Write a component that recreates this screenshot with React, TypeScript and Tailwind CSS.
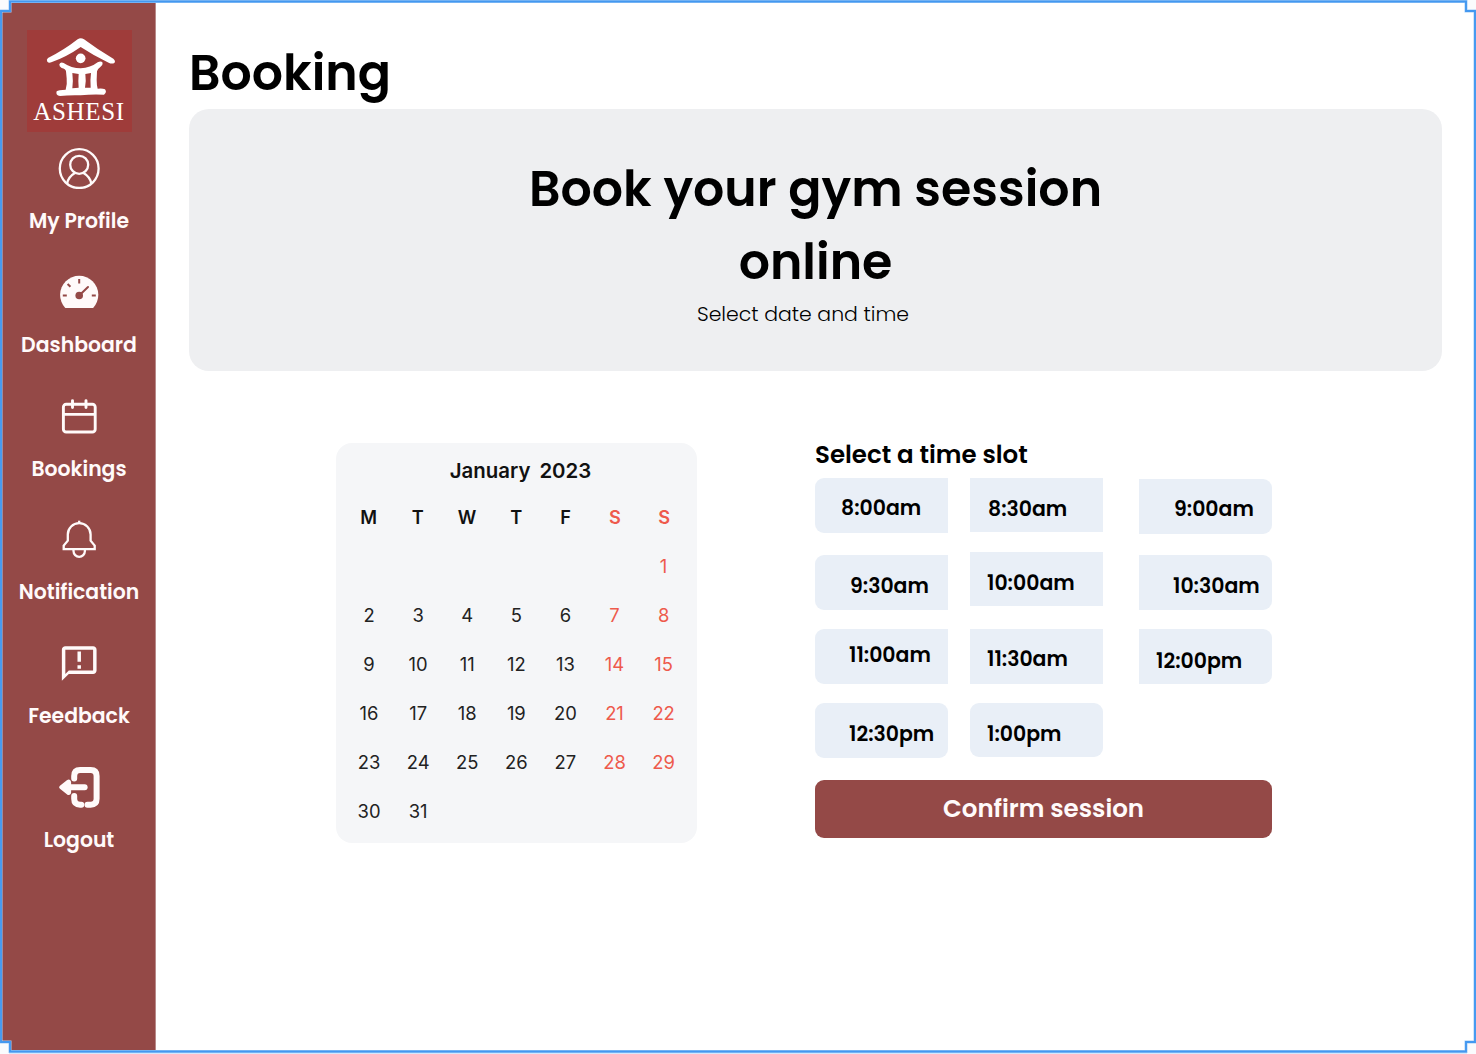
import type { ReactNode } from "react";

function Logo() {
  return (
    <div className="flex h-[102px] w-[105px] flex-col items-center bg-[#9f3c3a]">
      <svg width="105" height="66" viewBox="80 90 315 198" fill="#fff" className="shrink-0">
        <path d="M143 174 Q190 151 232 118 Q241 111 251 118 Q292 149 339 176 Q347 183 342 189 Q334 193 325 188 Q280 167 241 141 Q200 170 153 187 Q145 190 141 185 Q137 179 143 174Z" />
        <circle cx="241" cy="175" r="14.5" />
        <path d="M177 193 Q180 185 190 189 Q213 205 241 205 Q270 204 292 187 Q302 181 307 188 Q308 195 300 201 Q292 206 290 214 L289 240 Q289 256 292 266 Q306 264 314 268 Q321 277 311 284 Q275 282 241 286 Q205 285 179 288 Q165 286 169 274 Q174 269 196 269 Q201 252 199 235 L197 214 Q196 207 184 204 Q176 199 177 193Z" />
        <path d="M216 219 L235 222 Q233 245 235 263 L216 265 Q219 242 216 219Z M255 222 L272 219 Q269 242 271 263 L254 263 Q258 243 255 222Z" fill="#9f3c3a" />
      </svg>
      <span className="mt-[2px] font-['Liberation_Serif',serif] text-[25px] leading-7 tracking-[0.7px] text-white">ASHESI</span>
    </div>
  );
}

function Icon({ y, children }: { y: number; children: ReactNode }) {
  return (
    <svg width="48" height="42" viewBox={`55 ${y} 48 42`} fill="none" stroke="#fffafa" className="block shrink-0">
      {children}
    </svg>
  );
}

const nav = [
  {
    label: "My Profile",
    icon: (
      <Icon y={147}>
        <g strokeWidth="2.3">
          <circle cx="79.2" cy="168.6" r="19.4" />
          <circle cx="79.2" cy="164.8" r="9" />
          <path d="M67 184 C67.6 179 71 175.3 75.2 172.8 M91.4 184 C90.8 179 87.4 175.3 83.2 172.8" />
        </g>
      </Icon>
    ),
  },
  {
    label: "Dashboard",
    icon: (
      <Icon y={271}>
        <path d="M65.3 308 A19.1 19.1 0 1 1 93.1 308 Z" fill="#fffafa" stroke="none" />
        <g stroke="#944947" strokeWidth="2">
          <path d="M79.2 279v4.5 M62.8 295.5h4 M91.8 295.5h4 M67.6 284l2.8 2.8" />
          <path d="M79.2 295.5L88 287" strokeLinecap="round" />
        </g>
        <circle cx="79.2" cy="295.5" r="3.8" fill="#944947" stroke="none" />
      </Icon>
    ),
  },
  {
    label: "Bookings",
    icon: (
      <Icon y={395}>
        <g strokeWidth="2.9">
          <rect x="63.4" y="404.2" width="31.8" height="27.8" rx="2.8" />
          <path d="M63.5 414.4h31.6" />
          <path d="M72.5 400.6v7 M86 400.6v7" strokeLinecap="round" />
        </g>
      </Icon>
    ),
  },
  {
    label: "Notification",
    icon: (
      <Icon y={518}>
        <g strokeWidth="2.3">
          <path d="M79.2 520.7v3" />
          <path d="M63.7 549.2v-3.6l4.1-4.9v-6.3a11.4 11.2 0 0 1 22.8 0v6.3l4.1 4.9v3.6z" />
          <path d="M73.5 549.5v1.6a5.7 5.7 0 0 0 11.4 0v-1.6" />
        </g>
      </Icon>
    ),
  },
  {
    label: "Feedback",
    icon: (
      <Icon y={642}>
        <path
          transform="translate(58.4 642.7) scale(1.735)"
          fill="#fffafa"
          stroke="none"
          d="M20 2H4c-1.1 0-2 .9-2 2v18l4-4h14c1.1 0 2-.9 2-2V4c0-1.1-.9-2-2-2m0 14H6l-2 2V4h16zM11 5h2v6h-2zm0 8h2v2h-2z"
        />
      </Icon>
    ),
  },
  {
    label: "Logout",
    icon: (
      <Icon y={766}>
        <g strokeWidth="6" strokeLinecap="round">
          <path d="M74.2 778.4V776q0-5.9 5.9-5.9h10.6q5.9 0 5.9 5.9v22.8q0 5.9-5.9 5.9h-3.2" />
          <path d="M74.2 796v2.8q0 5.9 5.9 5.9h1.2" />
          <path d="M70 787.3h14.6" />
        </g>
        <path d="M61.2 787.3l6.9-5.5q1-.7 1 .4v10.2q0 1-1 .4z" fill="#fffafa" strokeWidth="4" strokeLinejoin="round" />
      </Icon>
    ),
  },
];

const weekdays = ["M", "T", "W", "T", "F", "S", "S"];
const cells: (number | null)[] = [...Array(6).fill(null), ...Array.from({ length: 31 }, (_, i) => i + 1)];

const slotColumns = [
  [
    { t: "8:00am", box: "h-[55px] rounded-l-[9px] pl-[26px] pt-[18px]" },
    { t: "9:30am", box: "mt-[22px] h-[55px] rounded-l-[9px] pl-[35px] pt-[19px]" },
    { t: "11:00am", box: "mt-[19px] h-[55px] rounded-l-[9px] pl-[34px] pt-[14px]" },
    { t: "12:30pm", box: "mt-[19px] h-[55px] rounded-[9px] pl-[34px] pt-[19px]" },
  ],
  [
    { t: "8:30am", box: "h-[54px] pl-[18px] pt-[19px]" },
    { t: "10:00am", box: "mt-[20px] h-[54px] pl-[17px] pt-[19px]" },
    { t: "11:30am", box: "mt-[23px] h-[55px] pl-[17px] pt-[18px]" },
    { t: "1:00pm", box: "mt-[19px] h-[54px] rounded-[9px] pl-[17px] pt-[19px]" },
  ],
  [
    { t: "9:00am", box: "mt-[1px] h-[55px] rounded-r-[9px] pl-[35px] pt-[18px]" },
    { t: "10:30am", box: "mt-[21px] h-[55px] rounded-r-[9px] pl-[34px] pt-[19px]" },
    { t: "12:00pm", box: "mt-[19px] h-[55px] rounded-r-[9px] pl-[17px] pt-[20px]" },
  ],
];

function Frame() {
  return (
    <svg className="pointer-events-none absolute inset-0" width="1476" height="1054" fill="none">
      <g fill="#fafbfd">
        <path d="M0 0H9V11H0Z M1467 0H1476V10H1467Z M0 1042H9V1054H0Z M1467 1042H1476V1054H1467Z" />
        <path d="M9 1052H1467V1054H9Z" fill="#d5e9fc" />
      </g>
      <path d="M10 1.5H1466V11H1475V1042H1466V1051.5H10V1042H1V11H10Z" stroke="#a4cdf7" strokeWidth="3" />
      <path d="M10 1.5H1466V11H1475V1042H1466V1051.5H10V1042H1V11H10Z" stroke="#4398f0" strokeWidth="1.9" />
    </svg>
  );
}

export default function App() {
  return (
    <div className="relative flex h-[1054px] w-[1476px] overflow-hidden bg-white font-['Poppins','Inter',sans-serif] text-black">
      <aside className="flex w-[156px] shrink-0 flex-col items-center border-r border-[#b98a89] bg-[#944947] pl-[3px] pt-[30px]">
        <Logo />
        <nav className="mt-[15px] flex flex-col items-center">
          {nav.map((n) => (
            <a key={n.label} className="flex h-[123.8px] flex-col items-center">
              {n.icon}
              <span className="mt-[18px] whitespace-nowrap text-[20.4px] font-semibold leading-7 text-[#fffafa]">{n.label}</span>
            </a>
          ))}
        </nav>
      </aside>

      <main className="flex flex-1 flex-col pl-[33px] pr-[34px]">
        <h1 className="mt-[37px] h-[72px] text-[49px] font-semibold leading-[72px]">Booking</h1>

        <section className="flex h-[262px] flex-col items-center rounded-[20px] bg-[#eeeff1] pt-[43px]">
          <h2 className="h-[148px] text-center text-[49.05px] font-semibold leading-[73.4px]">
            Book your gym session
            <br />
            online
          </h2>
          <p className="-ml-[25px] text-[20.45px] font-light leading-7">Select date and time</p>
        </section>

        <div className="mt-[72px] flex pl-[147px]">
          <section className="h-[400px] w-[361px] rounded-[16px] bg-[#f5f6f8] px-[8px] font-['Inter',sans-serif] text-[#111]">
            <h3 className="mt-[14px] flex justify-center gap-[9px] pl-[8px] text-[20.4px] font-semibold leading-7">
              <span>January</span>
              <span>2023</span>
            </h3>
            <div className="mt-[8px] grid grid-cols-[repeat(7,49.25px)] text-center text-[18.2px] font-semibold leading-[49px]">
              {weekdays.map((d, i) => (
                <span key={i} className={i > 4 ? "text-[#ee5a4c]" : ""}>
                  {d}
                </span>
              ))}
            </div>
            <div className="grid grid-cols-[repeat(7,49.1px)] pl-[0.5px] text-center text-[18.4px] leading-[49.1px]">
              {cells.map((c, i) => (
                <span key={i} className={i % 7 > 4 ? "text-[#ee5a4c]" : "text-[#222]"}>
                  {c}
                </span>
              ))}
            </div>
          </section>

          <section className="ml-[118px] w-[457px]">
            <h3 className="-mt-[4px] h-[39px] text-[24.5px] font-semibold leading-8">Select a time slot</h3>
            <div className="flex h-[302px]">
              {slotColumns.map((col, ci) => (
                <div key={ci} className={ci === 0 ? "w-[133px]" : ci === 1 ? "ml-[22px] w-[133px]" : "ml-[36px] w-[133px]"}>
                  {col.map((s) => (
                    <div key={s.t} className={`whitespace-nowrap bg-[#e9eff7] text-[20.45px] font-semibold leading-6 ${s.box}`}>
                      {s.t}
                    </div>
                  ))}
                </div>
              ))}
            </div>
            <button className="flex h-[57.5px] w-full items-center justify-center rounded-[9px] bg-[#944947] pt-[2px] text-[24.5px] font-semibold text-[#fffafa]">
              Confirm session
            </button>
          </section>
        </div>
      </main>
      <Frame />
    </div>
  );
}
